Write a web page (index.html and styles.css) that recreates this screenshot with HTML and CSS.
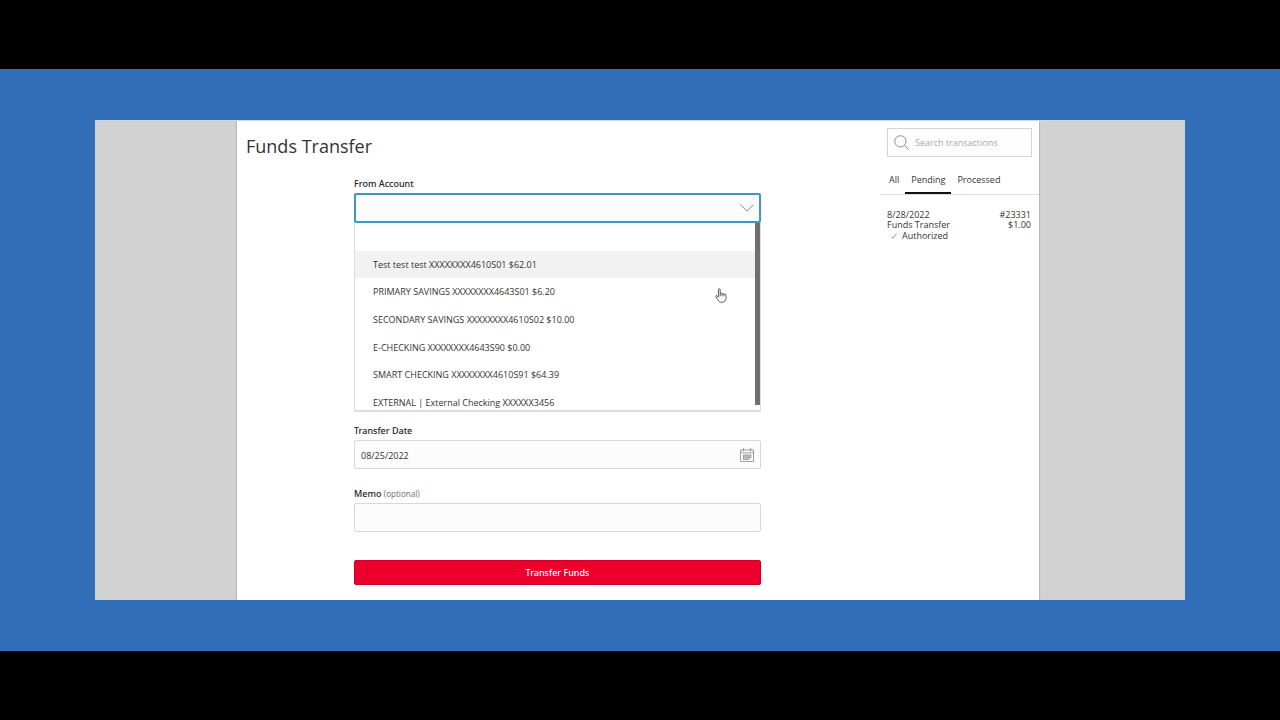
FILE: index.html
```html
<!DOCTYPE html>
<html lang="en">
<head>
<meta charset="utf-8">
<meta name="viewport" content="width=device-width, initial-scale=1">
<title>Funds Transfer</title>
<link rel="stylesheet" href="styles.css">
</head>
<body>
<div class="band">
  <div class="stage">
    <div class="card">
      <main class="main">
        <h1 class="title">Funds Transfer</h1>
        <form class="form">
          <div class="field field-account">
            <label class="label" for="from">From Account</label>
            <div class="control">
              <select class="input select" id="from"><option></option></select>
              <svg class="icon chevron" viewBox="0 0 14 8" aria-hidden="true"><path d="M.5.7 7 7.2 13.5.7"/></svg>
              <div class="menu">
                <ul class="options" role="listbox" aria-label="From Account">
                  <li class="option" role="option"></li>
                  <li class="option active" role="option" aria-selected="true">Test test test XXXXXXXX4610S01 $62.01</li>
                  <li class="option" role="option">PRIMARY SAVINGS XXXXXXXX4643S01 $6.20</li>
                  <li class="option" role="option">SECONDARY SAVINGS XXXXXXXX4610S02 $10.00</li>
                  <li class="option" role="option">E-CHECKING XXXXXXXX4643S90 $0.00</li>
                  <li class="option" role="option">SMART CHECKING XXXXXXXX4610S91 $64.39</li>
                  <li class="option" role="option">EXTERNAL | External Checking XXXXXX3456</li>
                </ul>
                <div class="track"><div class="thumb"></div></div>
              </div>
              <svg class="pointer" viewBox="0 0 12 15" aria-hidden="true"><path d="M3.4 9.2V1.7C3.4.3 5.2.3 5.2 1.7v4.100c.2-1 1.8-.9 1.9.2.3-.8 1.8-.7 1.9.4.5-.7 2-.4 2 .9v2.500c0 2.700-1.600 4.500-4.200 4.500-2.400 0-3.200-1.200-4.100-2.700L.9 9c-.6-1.100.5-1.900 1.300-1.100zM5.200 5.800v2.500M7.100 6v2.300M9 6.400v1.900"/></svg>
            </div>
          </div>
          <div class="field">
            <label class="label" for="date">Transfer Date</label>
            <div class="control">
              <input class="input" id="date" type="text" value="08/25/2022">
              <svg class="icon calendar" viewBox="0 0 14 14" aria-hidden="true"><path d="M.5 2h13v11.500H.5zM.5 4.800h13M3.500.3v3M10.500.3v3M2.600 1.300h1.800M9.600 1.300h1.800M3.500 7h7.500v2.500H9v2H3.500zM3.500 9.200h7M5.300 7v4.500M7.200 7v4.500M9 7v3"/></svg>
            </div>
          </div>
          <div class="field">
            <label class="label" for="memo">Memo <span class="hint">(optional)</span></label>
            <div class="control"><input class="input" id="memo" type="text"></div>
          </div>
          <button class="submit" type="button">Transfer Funds</button>
        </form>
      </main>
      <aside class="side">
        <div class="search">
          <svg class="search-icon" viewBox="0 0 16 16" aria-hidden="true"><circle cx="6.800" cy="6.800" r="6"/><path d="m11.200 11.200 4.300 4.300"/></svg>
          <input class="search-input" type="search" placeholder="Search transactions" aria-label="Search transactions">
        </div>
        <div class="tabs" role="tablist">
          <button class="tab" type="button" role="tab">All</button>
          <button class="tab selected" type="button" role="tab" aria-selected="true">Pending</button>
          <button class="tab" type="button" role="tab">Processed</button>
        </div>
        <div class="transaction">
          <div class="row"><span>8/28/2022</span><span>#23331</span></div>
          <div class="row"><span>Funds Transfer</span><span>$1.00</span></div>
          <div class="status"><svg class="check" viewBox="0 0 6 6" aria-hidden="true"><path d="M.4 3.600 2 5.300 5.600.6"/></svg>Authorized</div>
        </div>
      </aside>
    </div>
  </div>
</div>
</body>
</html>
```
FILE: styles.css
```css
* { box-sizing: border-box; }

body {
  margin: 0;
  min-height: 100vh;
  display: flex;
  flex-direction: column;
  justify-content: center;
  background: #000;
  color: #333;
  font-family: "Open Sans", "Noto Sans", sans-serif;
  font-size: 9px;
}

button, input, select { font: inherit; color: inherit; }

.band { padding: 51px 95px; background: #316eb7; }

.stage {
  display: flex;
  justify-content: center;
  padding: 0 146px 0 142px;
  background: #d2d2d2;
  border-top: 1px solid #c3dcf0;
}

.card {
  flex: 1;
  display: flex;
  background: #fff;
  box-shadow: 0 0 2px #888;
  clip-path: inset(0 -3px);
}

.main { flex: 1; padding: 11px 119px 15px 9px; }

.title { margin: 0; font-size: 18px; line-height: 28px; font-weight: 400; }

.form { margin: 17px 0 0 108px; }

.field { margin-bottom: 18px; }
.field-account { margin-bottom: 201px; }

.label {
  display: block;
  height: 16px;
  line-height: 14px;
  font-family: "Noto Sans", "Open Sans", sans-serif;
  font-weight: 500;
  color: #222;
}
.hint { font-size: 8px; font-weight: 400; color: #777; }

.control { position: relative; }

.input {
  display: block;
  width: 100%;
  height: 29px;
  padding: 1px 6px 0;
  border: 1px solid #d8d8d8;
  border-radius: 2px;
  background: #fcfcfc;
  outline: 0;
}
.select {
  appearance: none;
  height: 30px;
  border: 2px solid #3d98bd;
}

.icon { position: absolute; right: 7px; fill: none; stroke: #888; }
.chevron { top: 11px; width: 14px; height: 8px; }
.calendar { top: 8px; width: 14px; height: 14px; stroke-width: 0.8; }

.menu {
  position: absolute;
  top: 100%;
  left: 0;
  right: 0;
  height: 189px;
  display: flex;
  overflow: hidden;
  background: #fff;
  border: solid #ddd;
  border-width: 0 1px 2px;
}
.options {
  flex: 1;
  height: 193px;
  margin: 0;
  padding: 0;
  list-style: none;
  display: flex;
  flex-direction: column;
}
.option { flex: 1; display: flex; align-items: center; padding-left: 18px; }
.active { background: #f2f2f2; }
.track { width: 5px; }
.thumb { height: 182px; background: #707070; }

.pointer {
  position: absolute;
  top: 95px;
  right: 34px;
  width: 12px;
  height: 15px;
  fill: #fff;
  stroke: #333;
  stroke-width: 0.8;
}

.submit {
  display: block;
  width: 100%;
  height: 25px;
  margin-top: 28px;
  padding: 0;
  border: 1px solid #c80028;
  border-radius: 2px;
  background: #ec002b;
  color: #fff;
  font-family: "Noto Sans", "Open Sans", sans-serif;
  font-weight: 500;
}

.side { width: 159px; padding-top: 7px; }

.search {
  display: flex;
  align-items: center;
  gap: 6px;
  height: 29px;
  margin: 0 7px;
  padding: 0 6px;
  border: 1px solid #d4d4d4;
  background: #fdfdfd;
}
.search-icon { flex: none; width: 15px; height: 15px; fill: none; stroke: #888; }
.search-input { flex: 1; min-width: 0; padding: 0; border: 0; background: none; outline: 0; }
.search-input::placeholder { color: #aaa; opacity: 1; }

.tabs {
  display: flex;
  height: 38px;
  padding: 10px 0 0 3px;
  border-bottom: 1px solid #ddd;
}
.tab {
  height: 27px;
  padding: 0 6px 2px;
  border: 0;
  background: none;
}
.selected { border-bottom: 2px solid #111; padding-bottom: 0; }

.transaction { padding: 14px 8px 0 7px; line-height: 11px; }
.row { display: flex; justify-content: space-between; }
.row + .row { line-height: 10px; }
.status { display: flex; align-items: center; gap: 5px; padding-left: 4px; }
.check { width: 6px; height: 6px; fill: none; stroke: #666; stroke-width: 0.7; }
```
